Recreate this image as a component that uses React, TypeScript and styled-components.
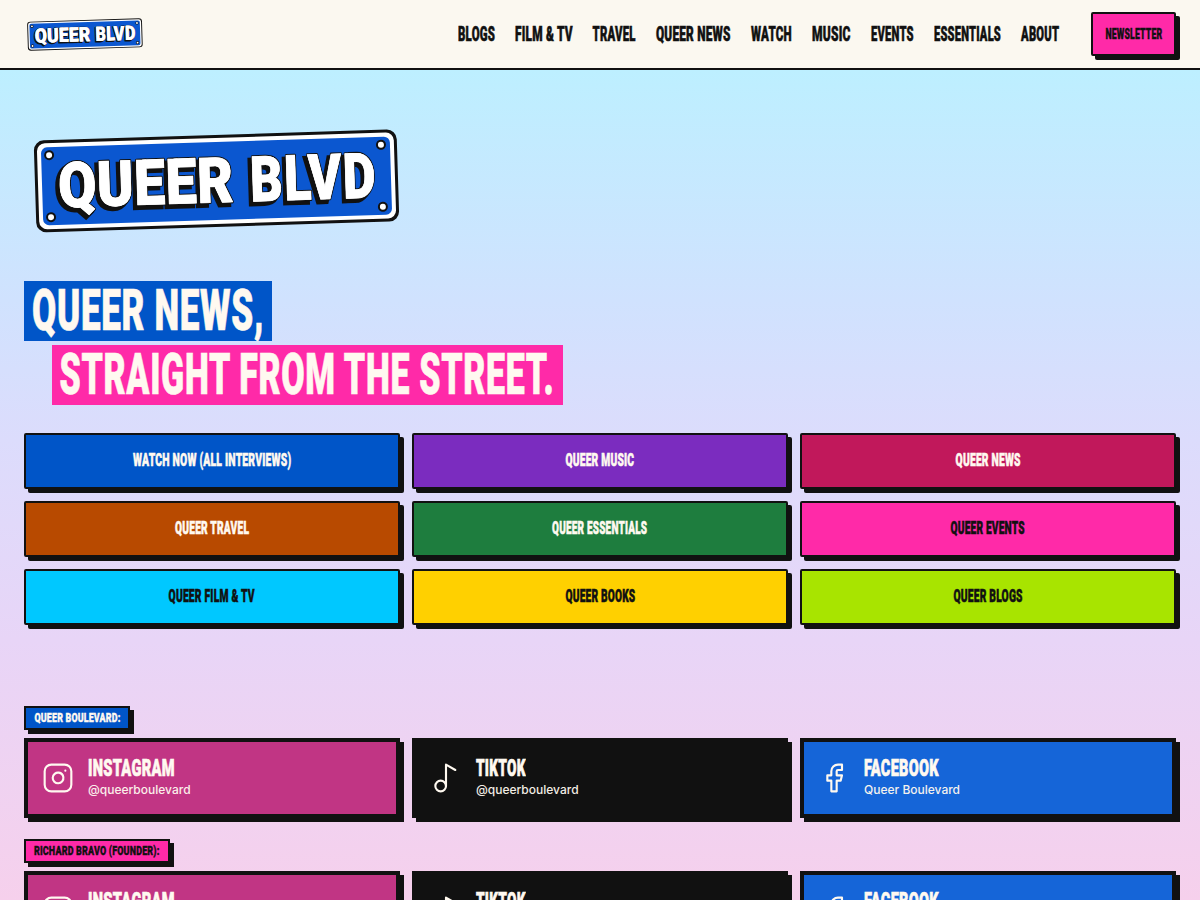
import { FC, ReactNode, useLayoutEffect, useRef } from 'react'
import styled, { createGlobalStyle } from 'styled-components'
import { Facebook, Instagram, Music2 } from 'lucide-react'

const GlobalStyle = createGlobalStyle`
  html, body {
    margin: 0;
    padding: 0;
  }
  body {
    font-family: "Inter", "Liberation Sans", sans-serif;
    color: #111;
  }
`

const Page = styled.div`
  height: 900px;
  overflow: hidden;
  background: linear-gradient(180deg, #bdefff 0, #bdefff 70px, #d0e2fe 300px, #dcdcfc 440px, #e8d5f7 640px, #f6d0ec 900px);
`
const Header = styled.header`
  height: 68px;
  box-sizing: content-box;
  display: flex;
  align-items: center;
  justify-content: space-between;
  padding: 0 24px;
  background-color: #fbf8f0;
  border-bottom: solid 2px #111;
`
const Nav = styled.nav`
  display: flex;
  align-items: center;
  gap: 20px;
`
const NavLink = styled.a`
  font-size: 20px;
  color: #111;
`
const NewsletterButton = styled.a`
  box-sizing: border-box;
  width: 85px;
  height: 44px;
  margin-left: 12px;
  display: flex;
  align-items: center;
  justify-content: center;
  font-size: 14px;
  color: #111;
  background-color: #ff2aa8;
  border: solid 2px #111;
  border-radius: 2px;
  box-shadow: 4px 4px 0 #111;
`
const Main = styled.main`
  padding: 56px 24px 0;
`
const Headline = styled.h1`
  margin: 45px 0 0;
  display: flex;
  flex-direction: column;
  align-items: flex-start;
  gap: 4px;
  font-size: 58px;
  font-weight: 900;
  color: #fff9f0;
`
const HeadlineLine = styled.span<{ $bg: string; $indent?: number }>`
  height: 60px;
  padding: 0 8px;
  margin-left: ${p => p.$indent ?? 0}px;
  display: flex;
  align-items: center;
  background-color: ${p => p.$bg};
`
const ButtonGrid = styled.div`
  margin-top: 28px;
  display: grid;
  grid-template-columns: repeat(3, 376px);
  gap: 12px;
`
const BigButton = styled.a<{ $bg: string; $fg: string }>`
  box-sizing: border-box;
  height: 56px;
  padding-bottom: 2px;
  display: flex;
  align-items: center;
  justify-content: center;
  font-size: 19px;
  color: ${p => p.$fg};
  background-color: ${p => p.$bg};
  border: solid 2px #111;
  border-radius: 2px;
  box-shadow: 4px 4px 0 #111;
`
const Socials = styled.section`
  margin-top: 81px;
`
const Tag = styled.div<{ $bg: string; $fg: string }>`
  box-sizing: border-box;
  width: fit-content;
  height: 24px;
  padding: 0 8px 1px;
  display: flex;
  align-items: center;
  font-size: 13.5px;
  letter-spacing: 0.06em;
  color: ${p => p.$fg};
  background-color: ${p => p.$bg};
  border: solid 2px #111;
  box-shadow: 4px 4px 0 #111;
`
const SocialGrid = styled.div`
  margin: 8px 0 21px;
  display: grid;
  grid-template-columns: repeat(3, 376px);
  gap: 12px;
`
const SocialCard = styled.a<{ $bg: string }>`
  box-sizing: border-box;
  height: 80px;
  padding: 0 14px;
  display: flex;
  align-items: center;
  gap: 14px;
  color: #fff9f0;
  background-color: ${p => p.$bg};
  border: solid 4px #111;
  box-shadow: 4px 4px 0 #111;
`
const SocialText = styled.div`
  padding-top: 2px;
  display: flex;
  flex-direction: column;
  align-items: flex-start;
`
const SocialName = styled.span`
  height: 18px;
  display: flex;
  align-items: center;
  font-size: 23px;
`
const SocialHandle = styled.span`
  margin-top: 4px;
  font-size: 12px;
  line-height: 16px;
  font-weight: 500;
  opacity: 0.95;
`
const FitBox = styled.span<{ $w: number; $stroke: number }>`
  width: ${p => p.$w}px;
  padding-bottom: 0.04em;
  display: inline-flex;
  justify-content: center;
  font-family: "Roboto", "Liberation Sans", sans-serif;
  font-weight: 900;
  letter-spacing: 0.02em;
  text-transform: uppercase;
  white-space: nowrap;
  -webkit-text-stroke: ${p => p.$stroke}em currentColor;
`
const FitInner = styled.span`
  flex: none;
`

// the condensed poster face isn't installed, so squeeze the label to its measured width
const Fit: FC<{ w: number; stroke?: number; children: ReactNode }> = ({ w, stroke = 0.03, children }) => {
  const inner = useRef<HTMLSpanElement>(null)
  useLayoutEffect(() => {
    const el = inner.current
    if (el) el.style.transform = `scaleX(${w / el.offsetWidth})`
  }, [w])
  return (
    <FitBox $w={w} $stroke={stroke}>
      <FitInner ref={inner}>{children}</FitInner>
    </FitBox>
  )
}

const LogoSvg = styled.svg`
  display: block;
`

const bolts: [number, number][] = [[25, 24], [357, 24], [25, 86], [357, 86]]

const LogoWord: FC<{ x: number; length: number; scale: number; children: string }> = ({ x, length, scale, children }) => (
  <g fontFamily="Roboto, sans-serif" fontWeight="900" fontSize="63">
    <text transform={`translate(${x - 3} 79.5) scale(${scale} 1)`} textLength={length} fill="#111" stroke="#111" strokeWidth="4">{children}</text>
    <text transform={`translate(${x} 76.5) scale(${scale} 1)`} textLength={length} fill="#fff" stroke="#111" strokeWidth="3" strokeLinejoin="round" paintOrder="stroke">{children}</text>
    <text transform={`translate(${x} 76.5) scale(${scale} 1)`} textLength={length} fill="#fff" stroke="#fff" strokeWidth="0.8">{children}</text>
  </g>
)

const Logo: FC<{ width: number; height: number }> = ({ width, height }) => (
  <LogoSvg width={width} height={height} viewBox="0 0 376 110">
    <g transform="rotate(-1.8 191 55)">
      <rect x="11" y="9" width="363" height="92" rx="10" fill="#111" />
      <rect x="14" y="12" width="357" height="86" rx="8" fill="#fff" />
      <rect x="18" y="16" width="349" height="78" rx="6" fill="#0b57d0" />
      {bolts.map(([cx, cy]) => (
        <g key={`${cx}-${cy}`}>
          <circle cx={cx + 1} cy={cy} r="5" fill="#111" />
          <circle cx={cx + 1} cy={cy} r="3" fill="#fff" />
        </g>
      ))}
      <LogoWord x={34} length={199} scale={0.88}>QUEER</LogoWord>
      <LogoWord x={226} length={157} scale={0.8}>BLVD</LogoWord>
    </g>
  </LogoSvg>
)

const navItems: [string, number][] = [
  ['Blogs', 37], ['Film & TV', 58], ['Travel', 43], ['Queer News', 75], ['Watch', 41],
  ['Music', 39], ['Events', 43], ['Essentials', 67], ['About', 38],
]

const buttons: [string, number, string, string][] = [
  ['Watch Now (All Interviews)', 158, '#0055c8', '#fff9f0'],
  ['Queer Music', 69, '#7b2cbf', '#fff9f0'],
  ['Queer News', 65, '#c1185b', '#fff9f0'],
  ['Queer Travel', 74, '#b84a00', '#fff9f0'],
  ['Queer Essentials', 95, '#1e7d3e', '#fff9f0'],
  ['Queer Events', 74, '#ff2aa8', '#111'],
  ['Queer Film & TV', 86, '#00c8ff', '#111'],
  ['Queer Books', 70, '#ffd000', '#111'],
  ['Queer Blogs', 69, '#a8e400', '#111'],
]

const socialGroups = [
  { title: 'Queer Boulevard:', w: 86, bg: '#0055c8', fg: '#fff9f0', facebook: 'Queer Boulevard', handle: '@queerboulevard' },
  { title: 'Richard Bravo (Founder):', w: 126, bg: '#ff2aa8', fg: '#111', facebook: 'Richard Bravo', handle: '@richardbravo' },
]

export default function App() {
  return (
    <Page>
      <GlobalStyle />
      <Header>
        <Logo width={119} height={35} />
        <Nav>
          {navItems.map(([label, w]) => (
            <NavLink key={label}><Fit w={w}>{label}</Fit></NavLink>
          ))}
          <NewsletterButton><Fit w={57}>Newsletter</Fit></NewsletterButton>
        </Nav>
      </Header>
      <Main>
        <Logo width={376} height={110} />
        <Headline>
          <HeadlineLine $bg="#0055c8"><Fit w={232} stroke={0.012}>Queer News,</Fit></HeadlineLine>
          <HeadlineLine $bg="#ff2aa8" $indent={28}><Fit w={495} stroke={0.012}>Straight from the street.</Fit></HeadlineLine>
        </Headline>
        <ButtonGrid>
          {buttons.map(([label, w, bg, fg]) => (
            <BigButton key={label} $bg={bg} $fg={fg}><Fit w={w}>{label}</Fit></BigButton>
          ))}
        </ButtonGrid>
        <Socials>
          {socialGroups.map(group => (
            <div key={group.title}>
              <Tag $bg={group.bg} $fg={group.fg}><Fit w={group.w}>{group.title}</Fit></Tag>
              <SocialGrid>
                <SocialCard $bg="#c13584">
                  <Instagram size={32} strokeWidth={1.6} />
                  <SocialText>
                    <SocialName><Fit w={87}>Instagram</Fit></SocialName>
                    <SocialHandle>{group.handle}</SocialHandle>
                  </SocialText>
                </SocialCard>
                <SocialCard $bg="#111">
                  <Music2 size={32} strokeWidth={1.6} />
                  <SocialText>
                    <SocialName><Fit w={50}>TikTok</Fit></SocialName>
                    <SocialHandle>{group.handle}</SocialHandle>
                  </SocialText>
                </SocialCard>
                <SocialCard $bg="#1565d8">
                  <Facebook size={32} strokeWidth={1.6} />
                  <SocialText>
                    <SocialName><Fit w={75}>Facebook</Fit></SocialName>
                    <SocialHandle>{group.facebook}</SocialHandle>
                  </SocialText>
                </SocialCard>
              </SocialGrid>
            </div>
          ))}
        </Socials>
      </Main>
    </Page>
  )
}
